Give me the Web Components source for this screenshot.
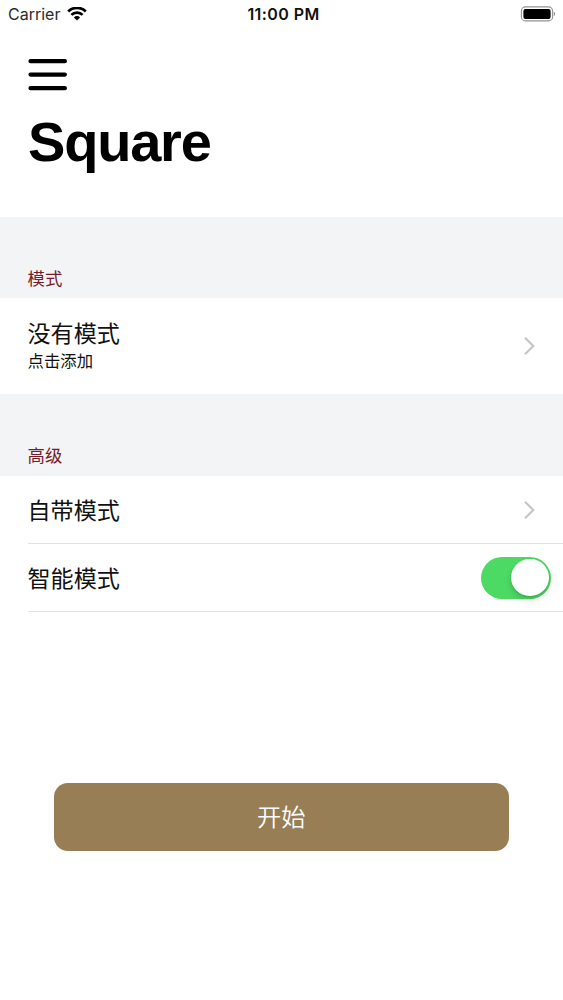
<!DOCTYPE html>
<html lang="zh-CN">
<head>
<meta charset="utf-8">
<title>Square</title>
<style>
html,body{margin:0;height:100%;background:#fff}
body{font-family:Inter,"Noto Sans CJK SC",sans-serif;color:#111;overflow:hidden}
</style>
</head>
<body>
<square-screen></square-screen>
<script>
function define(name, html) {
  const template = document.createElement('template');
  template.innerHTML = html;
  customElements.define(name, class extends HTMLElement {
    constructor() {
      super();
      this.attachShadow({mode: 'open'}).append(template.content.cloneNode(true));
    }
  });
}

define('status-bar', `
<style>
:host{display:grid;grid-template-columns:1fr auto 1fr;align-items:center;height:28px;padding:0 8px 0 8px;box-sizing:border-box;font-size:16px;line-height:28px}
.left{display:flex;align-items:center;gap:7px;color:#2b2b2d}
.carrier{letter-spacing:0}
.time{font-weight:600;letter-spacing:.42px;color:#111;padding-left:4px}
.right{display:flex;justify-content:flex-end}
svg{display:block}
</style>
<div class="left"><span class="carrier">Carrier</span>
<svg width="20" height="14" viewBox="0 .6 20 14" fill="none" stroke="#000" stroke-width="2.7"><path d="M1.2 5.1a12.4 12.4 0 0 1 17.6 0M4.4 8.5a7.9 7.9 0 0 1 11.2 0"/><path d="M6.9 11a4.4 4.4 0 0 1 6.2 0L10 14.1z" fill="#000" stroke="none"/></svg></div>
<span class="time">11:00 PM</span>
<div class="right"><svg width="35" height="16" viewBox="0 0 35 16"><rect x="1.4" y=".9" width="31.2" height="14" rx="4" fill="#fff" stroke="#929292" stroke-width="1.1"/><rect x="3.4" y="2.9" width="27.2" height="10" rx="2" fill="#000"/><path d="M33.8 5.8c1.6.6 1.6 3.6 0 4.2z" fill="#888"/></svg></div>`);

define('menu-button', `
<style>:host{display:block;width:40px;height:34px}svg{display:block}</style>
<svg width="40" height="34" viewBox="0 0 40 34" stroke="#000" stroke-width="4.2" stroke-linecap="round"><path d="M2.5 3.2h34.4M2.5 16.6h34.4M2.5 30.2h34.4"/></svg>`);

define('page-header', `
<style>
:host{display:block;height:189px;padding:30px 28px 0;box-sizing:border-box}
h1{margin:18px 0 0;font:700 56px/64px "Liberation Sans",Arial,sans-serif;letter-spacing:-1.2px;color:#000}
</style>
<menu-button></menu-button><h1><slot></slot></h1>`);

define('section-title', `
<style>
:host{display:flex;align-items:flex-end;height:var(--band,81px);padding:0 27.5px var(--drop,6px);box-sizing:border-box;background:#f3f4f6;color:#781b2b;font-size:17.4px;line-height:26px}
</style><slot></slot>`);

define('chevron-icon', `
<style>:host{display:block}svg{display:block}</style>
<svg width="12" height="20" viewBox="0 0 12 20" fill="none" stroke="#c6c6ca" stroke-width="2.2"><path d="M1 1.7L9.3 10 1 18.3"/></svg>`);

define('toggle-switch', `
<style>
:host{display:flex;justify-content:flex-end;width:70px;height:42px;padding:2.2px;box-sizing:border-box;border-radius:21px;background:#4cd964}
i{width:37.6px;height:37.6px;border-radius:50%;background:#fff;box-shadow:0 4px 6px rgba(0,0,0,.14),0 1px 2px rgba(0,0,0,.12)}
</style><i></i>`);

define('list-row', `
<style>
:host{display:block;height:var(--row,68px);padding-left:27.5px;box-sizing:border-box}
.inner{display:flex;justify-content:space-between;align-items:center;height:100%;box-sizing:border-box;padding-right:var(--end,27px);border-bottom:var(--line,1px solid #e2e2e4)}
.text{display:flex;flex-direction:column;padding-top:var(--nudge,2px);font-size:23.1px;line-height:30px;color:#111}
::slotted([slot=detail]){font-size:16.4px;line-height:25px}
</style>
<div class="inner"><div class="text"><slot></slot><slot name="detail"></slot></div><slot name="end"></slot></div>`);

define('start-button', `
<style>
:host{display:block}
button{display:block;width:100%;height:68px;border:0;border-radius:14px;padding:0 0 2px;background:#987e54;color:#fff;font:350 24.3px/66px "Noto Sans CJK SC",sans-serif}
</style><button><slot></slot></button>`);

define('square-screen', `
<style>
:host{display:flex;flex-direction:column;height:1000px;background:#fff}
.detail{--row:96px;--line:0;--nudge:0}
.second{--band:82px;--drop:7px}
.switch{--end:12px}
start-button{margin:171px 54.5px 0 54px}
</style>
<status-bar></status-bar>
<page-header>Square</page-header>
<section-title>模式</section-title>
<list-row class="detail"><span>没有模式</span><span slot="detail">点击添加</span><chevron-icon slot="end"></chevron-icon></list-row>
<section-title class="second">高级</section-title>
<list-row><span>自带模式</span><chevron-icon slot="end"></chevron-icon></list-row>
<list-row class="switch"><span>智能模式</span><toggle-switch slot="end"></toggle-switch></list-row>
<start-button>开始</start-button>`);
</script>
</body>
</html>
